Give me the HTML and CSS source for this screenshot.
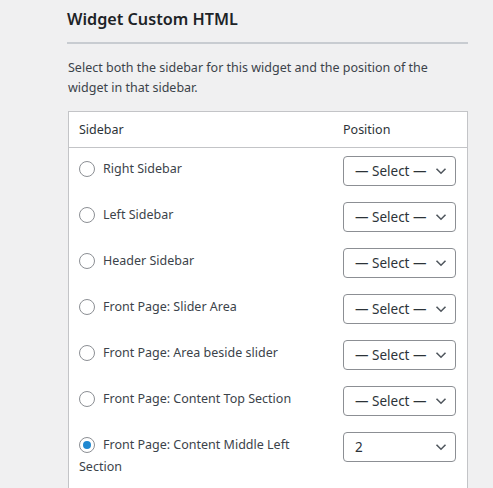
FILE: index.html
```html
<!DOCTYPE html>
<html>
<head>
<meta charset="utf-8">
<link rel="stylesheet" href="styles.css">
</head>
<body>
<div class="wrap">
  <h2 class="title">Widget Custom HTML</h2>
  <p class="desc">Select both the sidebar for this widget and the position of the widget in that sidebar.</p>
  <div class="table">
    <div class="row head">
      <div class="c1">Sidebar</div>
      <div class="c2">Position</div>
    </div>
    <div class="row">
      <div class="c1"><span class="radio"></span>Right Sidebar</div>
      <div class="c2"><div class="select"><span>— Select —</span><svg class="chev" width="12" height="8" viewBox="0 0 12 8"><path d="M1.5 1.8 L6 6.2 L10.5 1.8" fill="none" stroke="#50575e" stroke-width="1.6"/></svg></div></div>
    </div>
    <div class="row">
      <div class="c1"><span class="radio"></span>Left Sidebar</div>
      <div class="c2"><div class="select"><span>— Select —</span><svg class="chev" width="12" height="8" viewBox="0 0 12 8"><path d="M1.5 1.8 L6 6.2 L10.5 1.8" fill="none" stroke="#50575e" stroke-width="1.6"/></svg></div></div>
    </div>
    <div class="row">
      <div class="c1"><span class="radio"></span>Header Sidebar</div>
      <div class="c2"><div class="select"><span>— Select —</span><svg class="chev" width="12" height="8" viewBox="0 0 12 8"><path d="M1.5 1.8 L6 6.2 L10.5 1.8" fill="none" stroke="#50575e" stroke-width="1.6"/></svg></div></div>
    </div>
    <div class="row">
      <div class="c1"><span class="radio"></span>Front Page: Slider Area</div>
      <div class="c2"><div class="select"><span>— Select —</span><svg class="chev" width="12" height="8" viewBox="0 0 12 8"><path d="M1.5 1.8 L6 6.2 L10.5 1.8" fill="none" stroke="#50575e" stroke-width="1.6"/></svg></div></div>
    </div>
    <div class="row">
      <div class="c1"><span class="radio"></span>Front Page: Area beside slider</div>
      <div class="c2"><div class="select"><span>— Select —</span><svg class="chev" width="12" height="8" viewBox="0 0 12 8"><path d="M1.5 1.8 L6 6.2 L10.5 1.8" fill="none" stroke="#50575e" stroke-width="1.6"/></svg></div></div>
    </div>
    <div class="row">
      <div class="c1"><span class="radio"></span>Front Page: Content Top Section</div>
      <div class="c2"><div class="select"><span>— Select —</span><svg class="chev" width="12" height="8" viewBox="0 0 12 8"><path d="M1.5 1.8 L6 6.2 L10.5 1.8" fill="none" stroke="#50575e" stroke-width="1.6"/></svg></div></div>
    </div>
    <div class="row">
      <div class="c1"><span class="radio checked"></span>Front Page: Content Middle Left Section</div>
      <div class="c2"><div class="select"><span>2</span><svg class="chev" width="12" height="8" viewBox="0 0 12 8"><path d="M1.5 1.8 L6 6.2 L10.5 1.8" fill="none" stroke="#50575e" stroke-width="1.6"/></svg></div></div>
    </div>
  </div>
</div>
</body>
</html>
```
FILE: styles.css
```css
html, body {
  margin: 0;
  padding: 0;
  background: #f0f0f1;
  font-family: "Noto Sans", "Open Sans", sans-serif;
  color: #3c434a;
  font-size: 12.5px;
}
.wrap {
  margin-left: 68px;
  width: 400px;
  padding-top: 7px;
}
.title {
  margin: 0;
  font-size: 16.2px;
  font-weight: 600;
  color: #1d2327;
  line-height: 24px;
  margin-left: -1px;
  padding-bottom: 11px;
  border-bottom: 2px solid #c8ccd1;
}
.desc {
  margin: 0;
  padding-top: 14px;
  line-height: 20px;
  height: 53px;
}
.table {
  background: #fff;
  border: 1px solid #c3c4c7;
  border-bottom: none;
  height: 400px;
  overflow: hidden;
}
.row {
  display: flex;
}
.head {
  border-bottom: 1px solid #c3c4c7;
  height: 35px;
  align-items: center;
  color: #2c3338;
}
.c1 {
  width: 244px;
  padding-left: 10px;
  padding-right: 10px;
}
.c2 {
  width: 113px;
  padding: 0 10px;
}
.row:not(.head) .c1 {
  padding-top: 10px;
  line-height: 22px;
  padding-bottom: 6px;
}
.row:not(.head) .c2 {
  padding-top: 8px;
  padding-bottom: 8px;
}
.radio {
  display: inline-block;
  width: 14px;
  height: 14px;
  border: 1px solid #8c8f94;
  border-radius: 50%;
  vertical-align: -4px;
  margin-right: 8px;
  position: relative;
  background: #fff;
}
.radio.checked::after {
  content: "";
  position: absolute;
  left: 3px;
  top: 3px;
  width: 8px;
  height: 8px;
  border-radius: 50%;
  background: #2088d0;
}
.select {
  box-sizing: border-box;
  width: 113px;
  height: 30px;
  border: 1px solid #8c8f94;
  border-radius: 4px;
  display: flex;
  align-items: center;
  justify-content: space-between;
  padding: 0 8px 0 11px;
  font-size: 13.5px;
  color: #2c3338;
}
.chev {
  display: block;
}
```
